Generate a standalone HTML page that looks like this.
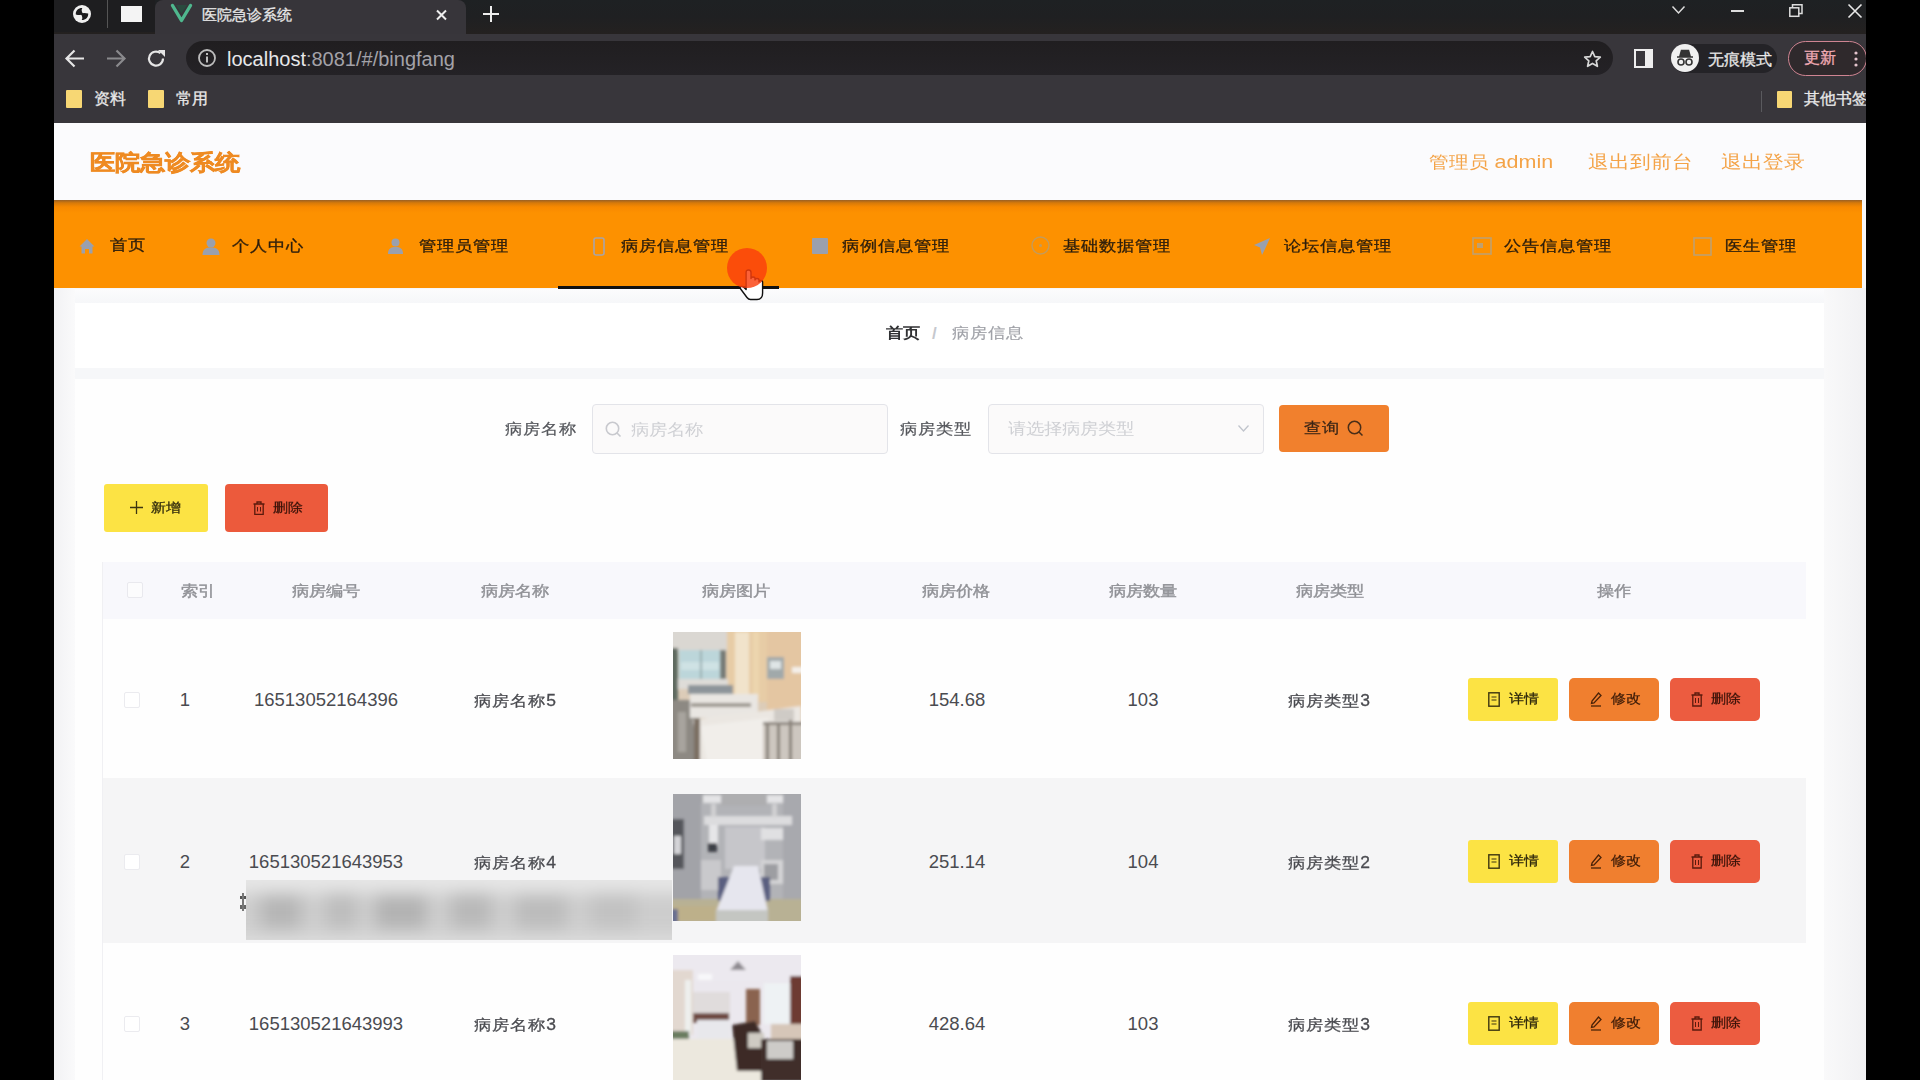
<!DOCTYPE html>
<html><head><meta charset="utf-8">
<style>
*{box-sizing:border-box;margin:0;padding:0}
html,body{width:1920px;height:1080px;overflow:hidden;background:#000;font-family:"Liberation Sans",sans-serif}
.a{position:absolute;white-space:nowrap;line-height:1}
#win{position:absolute;left:54px;top:0;width:1812px;height:1080px;overflow:hidden;background:#f7f7f9}
svg{position:absolute;overflow:visible}
</style></head><body>
<div id="win">
<!-- ===== CHROME ===== -->
<div class="a" style="left:0;top:0;width:1812px;height:34px;background:linear-gradient(#1e2123,#1f2022 50%,#242120)"></div>
<div class="a" style="left:0;top:0;width:101px;height:32px;background:#1e1e20"></div>
<div class="a" style="left:101px;top:0;width:311px;height:34px;background:#37353a;border-radius:8px 8px 0 0"></div>
<div class="a" style="left:0;top:34px;width:1812px;height:89px;background:#38363b"></div>
<!-- tab strip icons -->
<svg style="left:19px;top:5px" width="18" height="18" viewBox="0 0 18 18"><circle cx="9" cy="9" r="9" fill="#f0f0f0"/><path d="M2.8 9.4 C2.6 5.5 5.3 2.8 9.3 2.9 C8.1 4.8 8.6 7.2 10.6 9.3 C8 10.2 5.3 10.1 2.8 9.4 Z" fill="#1b1b1d"/><path d="M15.2 8.6 C15.4 12.5 12.7 15.2 8.7 15.1 C9.9 13.2 9.4 10.8 7.4 8.7 C10 7.8 12.7 7.9 15.2 8.6 Z" fill="#1b1b1d"/></svg>
<div class="a" style="left:53px;top:0;width:1px;height:28px;background:#555"></div>
<div class="a" style="left:67px;top:6px;width:21px;height:16px;background:#f4f4f4"></div>
<svg style="left:117px;top:4px" width="21" height="18" viewBox="0 0 21 18"><path d="M5 1 L10.5 9.5 L16 1 Z" fill="#2a4a3e"/><path d="M1.5 1.5 L10.5 16.5 L19.5 1.5" stroke="#4fb88e" stroke-width="3.4" fill="none" stroke-linejoin="round" stroke-linecap="round"/></svg>
<div class="a" style="left:148px;top:6.5px;font-size:15px;color:#e6e6e6;-webkit-text-stroke:0.3px #e6e6e6">医院急诊系统</div>
<svg style="left:382px;top:10px" width="11" height="10" viewBox="0 0 11 10"><path d="M1 0.5 L10 9.5 M10 0.5 L1 9.5" stroke="#eee" stroke-width="2"/></svg>
<svg style="left:429px;top:6px" width="16" height="16" viewBox="0 0 16 16"><path d="M8 0 V16 M0 8 H16" stroke="#eee" stroke-width="2"/></svg>
<!-- window controls -->
<svg style="left:1618px;top:6px" width="13" height="8" viewBox="0 0 13 8"><path d="M0.5 0.5 L6.5 7 L12.5 0.5" stroke="#ddd" stroke-width="1.5" fill="none"/></svg>
<div class="a" style="left:1677px;top:10px;width:13px;height:2px;background:#ddd"></div>
<svg style="left:1735px;top:4px" width="14" height="13" viewBox="0 0 14 13"><rect x="0.8" y="3.8" width="9" height="8.5" fill="none" stroke="#ddd" stroke-width="1.5"/><path d="M3.5 3.8 V0.8 H13 V9.5 H9.8" fill="none" stroke="#ddd" stroke-width="1.5"/></svg>
<svg style="left:1794px;top:4px" width="14" height="14" viewBox="0 0 14 14"><path d="M0.5 0.5 L13.5 13.5 M13.5 0.5 L0.5 13.5" stroke="#e8e8e8" stroke-width="1.6"/></svg>
<!-- toolbar -->
<svg style="left:11px;top:49px" width="20" height="19" viewBox="0 0 20 19"><path d="M19 9.5 H2 M9.5 1.5 L1.5 9.5 L9.5 17.5" stroke="#e6e6e6" stroke-width="2.2" fill="none"/></svg>
<svg style="left:52px;top:49px" width="20" height="19" viewBox="0 0 20 19"><path d="M1 9.5 H18 M10.5 1.5 L18.5 9.5 L10.5 17.5" stroke="#8a8a8d" stroke-width="2.2" fill="none"/></svg>
<svg style="left:93px;top:49px" width="19" height="19" viewBox="0 0 19 19"><path d="M16 9.5 A7 7 0 1 1 13.5 4.2" stroke="#e6e6e6" stroke-width="2.2" fill="none"/><path d="M11 1 L18 1 L18 8 Z" fill="#e6e6e6"/></svg>
<div class="a" style="left:132px;top:41px;width:1427px;height:34px;background:linear-gradient(#201e20,#242226);border-radius:17px"></div>
<svg style="left:144px;top:49px" width="18" height="18" viewBox="0 0 18 18"><circle cx="9" cy="9" r="8" stroke="#bdbdbd" stroke-width="1.8" fill="none"/><rect x="8" y="7.5" width="2" height="6" fill="#bdbdbd"/><rect x="8" y="4" width="2" height="2" fill="#bdbdbd"/></svg>
<div class="a" style="left:173px;top:49px;font-size:20px;color:#e8e8ea">localhost<span style="color:#a3a2a8">:8081/#/bingfang</span></div>
<svg style="left:1529px;top:50px" width="19" height="18" viewBox="0 0 19 18"><path d="M9.5 1.5 L11.8 6.6 L17.3 7.1 L13.2 10.8 L14.4 16.3 L9.5 13.4 L4.6 16.3 L5.8 10.8 L1.7 7.1 L7.2 6.6 Z" stroke="#d8d8d8" stroke-width="1.7" fill="none" stroke-linejoin="round"/></svg>
<svg style="left:1580px;top:49px" width="19" height="19" viewBox="0 0 19 19"><rect x="1" y="1" width="17" height="17" fill="none" stroke="#eee" stroke-width="2"/><rect x="11" y="1" width="7" height="17" fill="#eee"/></svg>
<div class="a" style="left:1617px;top:44px;width:106px;height:29px;background:#242327;border-radius:15px"></div>
<svg style="left:1617px;top:44px" width="28" height="28" viewBox="0 0 28 28"><circle cx="14" cy="14" r="14" fill="#f0f0f0"/><path d="M6 13 H22 M9 12 L10.5 6.5 H17.5 L19 12 Z" stroke="#333" stroke-width="1.6" fill="#333"/><circle cx="10" cy="18" r="3" stroke="#333" stroke-width="1.6" fill="none"/><circle cx="18" cy="18" r="3" stroke="#333" stroke-width="1.6" fill="none"/></svg>
<div class="a" style="left:1654px;top:52px;font-size:16px;color:#e8e8e8;-webkit-text-stroke:0.3px #e8e8e8">无痕模式</div>
<div class="a" style="left:1734px;top:41px;width:79px;height:35px;border:1.5px solid #cf8492;border-radius:18px;background:#2f292c"></div>
<div class="a" style="left:1750px;top:50px;font-size:16px;color:#f0aab4;-webkit-text-stroke:0.3px #f0aab4">更新</div>
<svg style="left:1800px;top:51px" width="4" height="16" viewBox="0 0 4 16"><circle cx="2" cy="2" r="1.6" fill="#e4c4cc"/><circle cx="2" cy="8" r="1.6" fill="#e4c4cc"/><circle cx="2" cy="14" r="1.6" fill="#e4c4cc"/></svg>
<!-- bookmarks bar -->
<div class="a" style="left:12px;top:90px;width:16px;height:18px;background:#f7d774;border-radius:1px"></div>
<div class="a" style="left:40px;top:91px;font-size:15.5px;color:#e8e8e8;-webkit-text-stroke:0.3px #e8e8e8">资料</div>
<div class="a" style="left:94px;top:90px;width:16px;height:18px;background:#f7d774;border-radius:1px"></div>
<div class="a" style="left:122px;top:91px;font-size:15.5px;color:#e8e8e8;-webkit-text-stroke:0.3px #e8e8e8">常用</div>
<div class="a" style="left:1707px;top:91px;width:1px;height:21px;background:#5a5a5e"></div>
<div class="a" style="left:1723px;top:91px;width:15px;height:17px;background:#f7d774;border-radius:1px"></div>
<div class="a" style="left:1750px;top:91px;font-size:15.5px;color:#e8e8e8;-webkit-text-stroke:0.3px #e8e8e8">其他书签</div>

<!-- ===== PAGE ===== -->
<div class="a" style="left:0;top:123px;width:1812px;height:77px;background:#fbfbfd"></div>
<div class="a" style="left:35.5px;top:150px;font-size:25px;font-weight:bold;color:#f29026;-webkit-text-stroke:0.6px #ee8a22;transform:scaleY(.87);transform-origin:50% 51%">医院急诊系统</div>
<div class="a" style="left:1375px;top:151.5px;font-size:20px;color:#f4a347;transform:scaleY(.87);transform-origin:50% 51%">管理员 <span style="font-size:21.5px">admin</span></div>
<div class="a" style="left:1533.5px;top:151.5px;font-size:20.5px;color:#f4a347;transform:scaleY(.87);transform-origin:50% 51%">退出到前台</div>
<div class="a" style="left:1666.5px;top:151.5px;font-size:20.5px;color:#f4a347;transform:scaleY(.87);transform-origin:50% 51%">退出登录</div>
<!-- nav -->
<div class="a" style="left:0;top:200px;width:1808px;height:88px;background:linear-gradient(rgba(120,80,50,.75) 0px,rgba(170,95,20,.45) 3px,rgba(230,110,0,.22) 7px,rgba(253,144,0,0) 13px),#fd9100"></div>
<div id="nav" style="position:absolute;left:0;top:0;color:#2b1d0c;font-size:17.6px;-webkit-text-stroke:0.35px #2b1d0c">
 <svg style="left:25px;top:238px" width="16" height="16" viewBox="0 0 16 16"><path d="M8 1 L15.5 8.5 L13.5 8.5 L13.5 15.5 L10 15.5 L10 11 L6 11 L6 15.5 L2.5 15.5 L2.5 8.5 L0.5 8.5 Z" fill="#9aa0ad"/></svg>
 <div class="a" style="left:55.5px;top:237px;transform:scaleY(.87);transform-origin:50% 51%">首页</div>
 <svg style="left:148px;top:238px" width="18" height="17" viewBox="0 0 18 17"><circle cx="9" cy="5" r="4.5" fill="#9aa0ad"/><path d="M0.5 17 C0.5 11 4 9.5 9 9.5 C14 9.5 17.5 11 17.5 17 Z" fill="#9aa0ad"/></svg>
 <div class="a" style="left:177.5px;top:238px;transform:scaleY(.87);transform-origin:50% 51%">个人中心</div>
 <svg style="left:334px;top:238px" width="15" height="16" viewBox="0 0 15 16"><circle cx="7.5" cy="4.5" r="4" fill="#9aa0ad"/><path d="M0 16 C0 10.5 3 9 7.5 9 C12 9 15 10.5 15 16 Z" fill="#9aa0ad"/></svg>
 <div class="a" style="left:364.5px;top:238px;transform:scaleY(.87);transform-origin:50% 51%">管理员管理</div>
 <svg style="left:539px;top:237px" width="12" height="19" viewBox="0 0 12 19"><rect x="1" y="1" width="10" height="17" rx="2" fill="none" stroke="#a8a4a8" stroke-width="1.6"/></svg>
 <div class="a" style="left:566.5px;top:238px;transform:scaleY(.87);transform-origin:50% 51%">病房信息管理</div>
 <svg style="left:758px;top:238px" width="16" height="16" viewBox="0 0 16 16"><rect x="0" y="0" width="16" height="16" rx="1" fill="#9aa0ad"/></svg>
 <div class="a" style="left:787.5px;top:238px;transform:scaleY(.87);transform-origin:50% 51%">病例信息管理</div>
 <svg style="left:977px;top:236px" width="19" height="19" viewBox="0 0 19 19"><circle cx="9.5" cy="9.5" r="8.5" fill="none" stroke="#c49b5a" stroke-width="1.4"/><circle cx="9.5" cy="9.5" r="1.5" fill="#c49b5a"/></svg>
 <div class="a" style="left:1008.5px;top:238px;transform:scaleY(.87);transform-origin:50% 51%">基础数据管理</div>
 <svg style="left:1200px;top:238px" width="16" height="17" viewBox="0 0 16 17"><path d="M16 0 L0 7 L6 9.5 L8 17 L11 11 Z" fill="#9aa0ad"/></svg>
 <div class="a" style="left:1229.5px;top:238px;transform:scaleY(.87);transform-origin:50% 51%">论坛信息管理</div>
 <svg style="left:1418px;top:237px" width="20" height="18" viewBox="0 0 20 18"><rect x="1" y="1" width="18" height="16" fill="none" stroke="#bfa070" stroke-width="1.6"/><rect x="5" y="6" width="6" height="5" fill="#bfa070"/></svg>
 <div class="a" style="left:1450px;top:238px;transform:scaleY(.87);transform-origin:50% 51%">公告信息管理</div>
 <svg style="left:1639px;top:237px" width="19" height="19" viewBox="0 0 19 19"><rect x="1" y="1" width="17" height="17" fill="none" stroke="#bfa070" stroke-width="1.6"/></svg>
 <div class="a" style="left:1670.5px;top:238px;transform:scaleY(.87);transform-origin:50% 51%">医生管理</div>
</div>
<div class="a" style="left:504px;top:286px;width:221px;height:3px;background:#111"></div>

<!-- page bg cards -->
<div class="a" style="left:0;top:288px;width:21px;height:792px;background:linear-gradient(90deg,#f2f2f4,#fafafb)"></div>
<div class="a" style="left:1770px;top:288px;width:42px;height:792px;background:linear-gradient(90deg,#f9f9fa,#f1f1f3)"></div>
<div class="a" style="left:21px;top:289px;width:1749px;height:14px;background:linear-gradient(#fcfcfd,#f6f7f9)"></div>
<div class="a" style="left:21px;top:303px;width:1749px;height:65px;background:#fff"></div>
<div class="a" style="left:21px;top:368px;width:1749px;height:11px;background:#f6f7f9"></div>
<div class="a" style="left:21px;top:379px;width:1749px;height:701px;background:#fefefe"></div>
<!-- breadcrumb -->
<div class="a" style="left:831.5px;top:325px;font-size:17px;font-weight:bold;color:#303133;transform:scaleY(.87);transform-origin:50% 51%">首页</div>
<div class="a" style="left:878px;top:325px;font-size:17px;font-weight:bold;color:#c6c8ce">/</div>
<div class="a" style="left:897.5px;top:325px;font-size:17.5px;color:#a0a2a8;-webkit-text-stroke:0.2px #a0a2a8;transform:scaleY(.87);transform-origin:50% 51%">病房信息</div>
<!-- search -->
<div class="a" style="left:451px;top:421px;font-size:17.6px;color:#55575c;-webkit-text-stroke:0.25px #55575c;transform:scaleY(.87);transform-origin:50% 51%">病房名称</div>
<div class="a" style="left:538px;top:404px;width:296px;height:50px;border:1px solid #e3e4e9;border-radius:4px;background:#fbfafa"></div>
<svg style="left:551px;top:421px" width="17" height="17" viewBox="0 0 17 17"><circle cx="7.5" cy="7.5" r="6.2" fill="none" stroke="#c8c9ce" stroke-width="1.6"/><path d="M12 12 L15.5 15.5" stroke="#c8c9ce" stroke-width="1.6"/></svg>
<div class="a" style="left:576.5px;top:421px;font-size:18px;color:#cfd0d4;transform:scaleY(.87);transform-origin:50% 51%">病房名称</div>
<div class="a" style="left:846px;top:421px;font-size:17.6px;color:#55575c;-webkit-text-stroke:0.25px #55575c;transform:scaleY(.87);transform-origin:50% 51%">病房类型</div>
<div class="a" style="left:934px;top:404px;width:276px;height:50px;border:1px solid #e3e4e9;border-radius:4px;background:#fbfafa"></div>
<div class="a" style="left:953.5px;top:421px;font-size:17.9px;color:#cfd0d4;transform:scaleY(.87);transform-origin:50% 51%">请选择病房类型</div>
<svg style="left:1184px;top:425px" width="11" height="7" viewBox="0 0 11 7"><path d="M0.5 0.5 L5.5 6 L10.5 0.5" stroke="#c0c4cc" stroke-width="1.3" fill="none"/></svg>
<div class="a" style="left:1225px;top:405px;width:110px;height:47px;background:#f1802d;border-radius:4px"></div>
<div class="a" style="left:1249.5px;top:420px;font-size:17.5px;color:#3b2516;-webkit-text-stroke:0.3px #3b2516;transform:scaleY(.87);transform-origin:50% 51%">查询</div>
<svg style="left:1293px;top:420px" width="17" height="17" viewBox="0 0 17 17"><circle cx="7.5" cy="7.5" r="6.2" fill="none" stroke="#4a2e18" stroke-width="1.5"/><path d="M12 12 L15.5 15.5" stroke="#4a2e18" stroke-width="1.5"/></svg>
<!-- add/delete -->
<div class="a" style="left:50px;top:484px;width:104px;height:48px;background:#fce344;border-radius:3px"></div>
<svg style="left:76px;top:501px" width="13" height="13" viewBox="0 0 13 13"><path d="M6.5 0 V13 M0 6.5 H13" stroke="#3d3510" stroke-width="1.3"/></svg>
<div class="a" style="left:96.5px;top:500px;font-size:15px;color:#2f290c;-webkit-text-stroke:0.3px #2f290c;transform:scaleY(.87);transform-origin:50% 51%">新增</div>
<div class="a" style="left:171px;top:484px;width:103px;height:48px;background:#ec5a3c;border-radius:4px"></div>
<svg style="left:199px;top:501px" width="12" height="14" viewBox="0 0 12 14"><path d="M0.5 3 H11.5 M4 3 V1 H8 V3 M1.8 3 V13.3 H10.2 V3" stroke="#5a1a0c" stroke-width="1.3" fill="none"/><path d="M4.5 6 V10.5 M7.5 6 V10.5" stroke="#5a1a0c" stroke-width="1"/></svg>
<div class="a" style="left:218.5px;top:500px;font-size:15px;color:#3d140a;-webkit-text-stroke:0.3px #3d140a;transform:scaleY(.87);transform-origin:50% 51%">删除</div>
<!-- table -->
<div class="a" style="left:48px;top:562px;width:1704px;height:57px;background:#f8f8fc"></div>
<div class="a" style="left:48px;top:562px;width:1px;height:518px;background:#f0f0f3"></div>
<div class="a" style="left:73px;top:582px;width:16px;height:16px;border:1px solid #e9e9ee;border-radius:2px;background:#fcfcfd"></div>
<div class="a" style="left:44px;width:200px;text-align:center;top:583px;font-size:17.2px;color:#909196;-webkit-text-stroke:0.45px #909196;transform:scaleY(.87);transform-origin:50% 51%">索引</div>
<div class="a" style="left:172px;width:200px;text-align:center;top:583px;font-size:17.2px;color:#909196;-webkit-text-stroke:0.45px #909196;transform:scaleY(.87);transform-origin:50% 51%">病房编号</div>
<div class="a" style="left:361px;width:200px;text-align:center;top:583px;font-size:17.2px;color:#909196;-webkit-text-stroke:0.45px #909196;transform:scaleY(.87);transform-origin:50% 51%">病房名称</div>
<div class="a" style="left:582px;width:200px;text-align:center;top:583px;font-size:17.2px;color:#909196;-webkit-text-stroke:0.45px #909196;transform:scaleY(.87);transform-origin:50% 51%">病房图片</div>
<div class="a" style="left:802px;width:200px;text-align:center;top:583px;font-size:17.2px;color:#909196;-webkit-text-stroke:0.45px #909196;transform:scaleY(.87);transform-origin:50% 51%">病房价格</div>
<div class="a" style="left:989px;width:200px;text-align:center;top:583px;font-size:17.2px;color:#909196;-webkit-text-stroke:0.45px #909196;transform:scaleY(.87);transform-origin:50% 51%">病房数量</div>
<div class="a" style="left:1176px;width:200px;text-align:center;top:583px;font-size:17.2px;color:#909196;-webkit-text-stroke:0.45px #909196;transform:scaleY(.87);transform-origin:50% 51%">病房类型</div>
<div class="a" style="left:1460px;width:200px;text-align:center;top:583px;font-size:17.2px;color:#909196;-webkit-text-stroke:0.45px #909196;transform:scaleY(.87);transform-origin:50% 51%">操作</div>
<div class="a" style="left:49px;top:619px;width:1703px;height:159px;background:#fefefe"></div>
<div class="a" style="left:49px;top:778px;width:1703px;height:165px;background:#f5f5f6"></div>
<div class="a" style="left:49px;top:943px;width:1703px;height:137px;background:#fefefe"></div>
<div class="a" style="left:70px;top:692px;width:16px;height:16px;border:1px solid #ebebef;border-radius:2px;background:#fff"></div>
<div class="a" style="left:81px;width:100px;text-align:center;top:690.5px;font-size:18.5px;color:#4a4b50">1</div>
<div class="a" style="left:172px;width:200px;text-align:center;top:690.5px;font-size:18.5px;color:#4a4b50">16513052164396</div>
<div class="a" style="left:361px;width:200px;text-align:center;top:692.5px;font-size:17.5px;color:#4a4b50;-webkit-text-stroke:0.3px #4a4b50;transform:scaleY(.87);transform-origin:50% 51%">病房名称<span style="display:inline-block;transform:scaleY(1.1);transform-origin:50% 85%">5</span></div>
<div class="a" style="left:803px;width:200px;text-align:center;top:690.5px;font-size:18.5px;color:#4a4b50">154.68</div>
<div class="a" style="left:989px;width:200px;text-align:center;top:690.5px;font-size:18.5px;color:#4a4b50">103</div>
<div class="a" style="left:1175px;width:200px;text-align:center;top:692.5px;font-size:17.5px;color:#4a4b50;-webkit-text-stroke:0.3px #4a4b50;transform:scaleY(.87);transform-origin:50% 51%">病房类型<span style="display:inline-block;transform:scaleY(1.1);transform-origin:50% 85%">3</span></div>
<div class="a" style="left:1414px;top:678px;width:90px;height:43px;background:#fce344;border-radius:3px"></div>
<svg style="left:1434px;top:692px" width="12" height="15" viewBox="0 0 12 15"><rect x="0.8" y="0.8" width="10.4" height="13.4" fill="none" stroke="#3d3510" stroke-width="1.4"/><path d="M3.5 5 H8.5 M3.5 8 H8.5" stroke="#3d3510" stroke-width="1.2"/></svg>
<div class="a" style="left:1454.5px;top:691px;font-size:15px;color:#2f290c;-webkit-text-stroke:0.3px #2f290c;transform:scaleY(.87);transform-origin:50% 51%">详情</div>
<div class="a" style="left:1515px;top:678px;width:90px;height:43px;background:#f07f2f;border-radius:5px"></div>
<svg style="left:1536px;top:692px" width="12" height="15" viewBox="0 0 12 15"><path d="M8.5 1 L11 3.5 L4 11 L1.5 11.5 L2 9 Z" fill="none" stroke="#4a2208" stroke-width="1.3"/><path d="M1 14 H11" stroke="#4a2208" stroke-width="1.3"/></svg>
<div class="a" style="left:1556.5px;top:691px;font-size:15px;color:#3d1c08;-webkit-text-stroke:0.3px #3d1c08;transform:scaleY(.87);transform-origin:50% 51%">修改</div>
<div class="a" style="left:1616px;top:678px;width:90px;height:43px;background:#ec5c40;border-radius:5px"></div>
<svg style="left:1637px;top:692px" width="12" height="15" viewBox="0 0 12 15"><path d="M0.5 3 H11.5 M4 3 V1 H8 V3 M1.8 3 V14 H10.2 V3" stroke="#5a1a0c" stroke-width="1.3" fill="none"/><path d="M4.5 6 V11 M7.5 6 V11" stroke="#5a1a0c" stroke-width="1"/></svg>
<div class="a" style="left:1656.5px;top:691px;font-size:15px;color:#3d140a;-webkit-text-stroke:0.3px #3d140a;transform:scaleY(.87);transform-origin:50% 51%">删除</div>
<div class="a" style="left:70px;top:854px;width:16px;height:16px;border:1px solid #ebebef;border-radius:2px;background:#fff"></div>
<div class="a" style="left:81px;width:100px;text-align:center;top:852.5px;font-size:18.5px;color:#4a4b50">2</div>
<div class="a" style="left:172px;width:200px;text-align:center;top:852.5px;font-size:18.5px;color:#4a4b50">165130521643953</div>
<div class="a" style="left:361px;width:200px;text-align:center;top:854.5px;font-size:17.5px;color:#4a4b50;-webkit-text-stroke:0.3px #4a4b50;transform:scaleY(.87);transform-origin:50% 51%">病房名称<span style="display:inline-block;transform:scaleY(1.1);transform-origin:50% 85%">4</span></div>
<div class="a" style="left:803px;width:200px;text-align:center;top:852.5px;font-size:18.5px;color:#4a4b50">251.14</div>
<div class="a" style="left:989px;width:200px;text-align:center;top:852.5px;font-size:18.5px;color:#4a4b50">104</div>
<div class="a" style="left:1175px;width:200px;text-align:center;top:854.5px;font-size:17.5px;color:#4a4b50;-webkit-text-stroke:0.3px #4a4b50;transform:scaleY(.87);transform-origin:50% 51%">病房类型<span style="display:inline-block;transform:scaleY(1.1);transform-origin:50% 85%">2</span></div>
<div class="a" style="left:1414px;top:840px;width:90px;height:43px;background:#fce344;border-radius:3px"></div>
<svg style="left:1434px;top:854px" width="12" height="15" viewBox="0 0 12 15"><rect x="0.8" y="0.8" width="10.4" height="13.4" fill="none" stroke="#3d3510" stroke-width="1.4"/><path d="M3.5 5 H8.5 M3.5 8 H8.5" stroke="#3d3510" stroke-width="1.2"/></svg>
<div class="a" style="left:1454.5px;top:853px;font-size:15px;color:#2f290c;-webkit-text-stroke:0.3px #2f290c;transform:scaleY(.87);transform-origin:50% 51%">详情</div>
<div class="a" style="left:1515px;top:840px;width:90px;height:43px;background:#f07f2f;border-radius:5px"></div>
<svg style="left:1536px;top:854px" width="12" height="15" viewBox="0 0 12 15"><path d="M8.5 1 L11 3.5 L4 11 L1.5 11.5 L2 9 Z" fill="none" stroke="#4a2208" stroke-width="1.3"/><path d="M1 14 H11" stroke="#4a2208" stroke-width="1.3"/></svg>
<div class="a" style="left:1556.5px;top:853px;font-size:15px;color:#3d1c08;-webkit-text-stroke:0.3px #3d1c08;transform:scaleY(.87);transform-origin:50% 51%">修改</div>
<div class="a" style="left:1616px;top:840px;width:90px;height:43px;background:#ec5c40;border-radius:5px"></div>
<svg style="left:1637px;top:854px" width="12" height="15" viewBox="0 0 12 15"><path d="M0.5 3 H11.5 M4 3 V1 H8 V3 M1.8 3 V14 H10.2 V3" stroke="#5a1a0c" stroke-width="1.3" fill="none"/><path d="M4.5 6 V11 M7.5 6 V11" stroke="#5a1a0c" stroke-width="1"/></svg>
<div class="a" style="left:1656.5px;top:853px;font-size:15px;color:#3d140a;-webkit-text-stroke:0.3px #3d140a;transform:scaleY(.87);transform-origin:50% 51%">删除</div>
<div class="a" style="left:70px;top:1016px;width:16px;height:16px;border:1px solid #ebebef;border-radius:2px;background:#fff"></div>
<div class="a" style="left:81px;width:100px;text-align:center;top:1014.5px;font-size:18.5px;color:#4a4b50">3</div>
<div class="a" style="left:172px;width:200px;text-align:center;top:1014.5px;font-size:18.5px;color:#4a4b50">165130521643993</div>
<div class="a" style="left:361px;width:200px;text-align:center;top:1016.5px;font-size:17.5px;color:#4a4b50;-webkit-text-stroke:0.3px #4a4b50;transform:scaleY(.87);transform-origin:50% 51%">病房名称<span style="display:inline-block;transform:scaleY(1.1);transform-origin:50% 85%">3</span></div>
<div class="a" style="left:803px;width:200px;text-align:center;top:1014.5px;font-size:18.5px;color:#4a4b50">428.64</div>
<div class="a" style="left:989px;width:200px;text-align:center;top:1014.5px;font-size:18.5px;color:#4a4b50">103</div>
<div class="a" style="left:1175px;width:200px;text-align:center;top:1016.5px;font-size:17.5px;color:#4a4b50;-webkit-text-stroke:0.3px #4a4b50;transform:scaleY(.87);transform-origin:50% 51%">病房类型<span style="display:inline-block;transform:scaleY(1.1);transform-origin:50% 85%">3</span></div>
<div class="a" style="left:1414px;top:1002px;width:90px;height:43px;background:#fce344;border-radius:3px"></div>
<svg style="left:1434px;top:1016px" width="12" height="15" viewBox="0 0 12 15"><rect x="0.8" y="0.8" width="10.4" height="13.4" fill="none" stroke="#3d3510" stroke-width="1.4"/><path d="M3.5 5 H8.5 M3.5 8 H8.5" stroke="#3d3510" stroke-width="1.2"/></svg>
<div class="a" style="left:1454.5px;top:1015px;font-size:15px;color:#2f290c;-webkit-text-stroke:0.3px #2f290c;transform:scaleY(.87);transform-origin:50% 51%">详情</div>
<div class="a" style="left:1515px;top:1002px;width:90px;height:43px;background:#f07f2f;border-radius:5px"></div>
<svg style="left:1536px;top:1016px" width="12" height="15" viewBox="0 0 12 15"><path d="M8.5 1 L11 3.5 L4 11 L1.5 11.5 L2 9 Z" fill="none" stroke="#4a2208" stroke-width="1.3"/><path d="M1 14 H11" stroke="#4a2208" stroke-width="1.3"/></svg>
<div class="a" style="left:1556.5px;top:1015px;font-size:15px;color:#3d1c08;-webkit-text-stroke:0.3px #3d1c08;transform:scaleY(.87);transform-origin:50% 51%">修改</div>
<div class="a" style="left:1616px;top:1002px;width:90px;height:43px;background:#ec5c40;border-radius:5px"></div>
<svg style="left:1637px;top:1016px" width="12" height="15" viewBox="0 0 12 15"><path d="M0.5 3 H11.5 M4 3 V1 H8 V3 M1.8 3 V14 H10.2 V3" stroke="#5a1a0c" stroke-width="1.3" fill="none"/><path d="M4.5 6 V11 M7.5 6 V11" stroke="#5a1a0c" stroke-width="1"/></svg>
<div class="a" style="left:1656.5px;top:1015px;font-size:15px;color:#3d140a;-webkit-text-stroke:0.3px #3d140a;transform:scaleY(.87);transform-origin:50% 51%">删除</div>
<svg style="left:619px;top:632px;overflow:hidden" width="128" height="127" viewBox="0 0 128 127">
<defs><filter id="bl1" x="-20%" y="-20%" width="140%" height="140%"><feGaussianBlur stdDeviation="1.8"/></filter></defs>
<rect width="128" height="127" fill="#dcccb8"/>
<g filter="url(#bl1)">
<rect x="-5" y="-5" width="62" height="25" fill="#dad7d2"/>
<rect x="54" y="-5" width="80" height="75" fill="#e7cca6"/>
<rect x="94" y="-5" width="40" height="85" fill="#e4c6a2"/>
<rect x="62" y="0" width="14" height="65" fill="#f1e3cb"/>
<rect x="80" y="0" width="6" height="65" fill="#ecd5ae"/>
<rect x="-5" y="16" width="10" height="56" fill="#5e6a60"/>
<rect x="6" y="18" width="42" height="30" fill="#bcd6da"/>
<rect x="8" y="30" width="38" height="8" fill="#cfe2e4"/>
<rect x="27" y="18" width="2" height="30" fill="#98aeb0"/>
<rect x="47" y="18" width="6" height="44" fill="#767a76"/>
<rect x="5" y="47" width="50" height="10" fill="#dedcd8"/>
<rect x="15" y="53" width="45" height="9" fill="#8d949a"/>
<rect x="94" y="25" width="17" height="22" fill="#a1a9aa"/>
<rect x="97" y="29" width="11" height="8" fill="#dfe5e6"/>
<rect x="119" y="35" width="12" height="6" fill="#f4f0ea"/>
<rect x="-5" y="68" width="30" height="64" fill="#8d8983"/>
<rect x="5" y="80" width="8" height="40" fill="#a8a49e"/>
<rect x="17" y="62" width="68" height="24" fill="#e9e6e2"/>
<rect x="18" y="71" width="60" height="4" fill="#9c978f"/>
<polygon points="20,88 128,74 128,132 26,132" fill="#ebe7e2"/>
<polygon points="28,94 95,86 96,132 34,132" fill="#f1eeea"/>
<rect x="101" y="77" width="20" height="12" fill="#cfcbc6"/>
<rect x="90" y="90" width="40" height="42" fill="#cdc7c0"/>
<rect x="93" y="92" width="3" height="40" fill="#857e76"/>
<rect x="104" y="90" width="3" height="42" fill="#857e76"/>
<rect x="116" y="88" width="3" height="44" fill="#857e76"/>
<rect x="90" y="90" width="40" height="3" fill="#8a837b"/>
<rect x="21" y="86" width="6" height="46" fill="#7a6e62"/>
</g></svg>
<svg style="left:619px;top:794px;overflow:hidden" width="128" height="127" viewBox="0 0 128 127">
<defs><filter id="bl2" x="-20%" y="-20%" width="140%" height="140%"><feGaussianBlur stdDeviation="1.7"/></filter></defs>
<rect width="128" height="127" fill="#b2b3b7"/>
<g filter="url(#bl2)">
<rect x="-5" y="-5" width="140" height="14" fill="#a6a7aa"/>
<rect x="30" y="1" width="84" height="8" fill="#e4e4e6"/>
<rect x="48" y="-5" width="46" height="17" fill="#aeaeb0"/>
<rect x="-5" y="0" width="33" height="132" fill="#a2a3a8"/>
<rect x="-5" y="25" width="16" height="50" fill="#54565c"/>
<rect x="1" y="42" width="7" height="18" fill="#d4d4d8"/>
<rect x="110" y="0" width="25" height="132" fill="#a8a9ae"/>
<rect x="52" y="33" width="40" height="42" fill="#c6c6ca"/>
<rect x="31" y="22" width="88" height="9" fill="#dcdcde"/>
<rect x="38" y="10" width="5" height="13" fill="#d0d0d2"/>
<rect x="99" y="10" width="5" height="13" fill="#d0d0d2"/>
<rect x="88" y="34" width="22" height="12" fill="#e0e0e2"/>
<rect x="36" y="31" width="9" height="20" fill="#e6e6e8"/>
<rect x="35" y="49" width="9" height="9" fill="#3e4046"/>
<rect x="88" y="66" width="22" height="24" fill="#d4d4d6"/>
<rect x="91" y="70" width="14" height="16" fill="#9d9ea2"/>
<rect x="28" y="66" width="20" height="30" fill="#c9c9cc"/>
<rect x="-5" y="105" width="140" height="27" fill="#b8b194"/>
<rect x="0" y="112" width="50" height="15" fill="#bdb08a"/>
<polygon points="45,83 57,83 57,107 45,107" fill="#5a5e80"/>
<polygon points="85,83 97,83 97,107 86,107" fill="#5a5e80"/>
<polygon points="61,72 85,72 95,118 43,118" fill="#e6e6ee"/>
<rect x="43" y="116" width="52" height="15" fill="#c4c6c2"/>
<rect x="-5" y="115" width="10" height="15" fill="#6a6f90"/>
</g></svg>
<svg style="left:619px;top:955px;overflow:hidden" width="128" height="127" viewBox="0 0 128 127">
<defs><filter id="bl3" x="-20%" y="-20%" width="140%" height="140%"><feGaussianBlur stdDeviation="1.7"/></filter></defs>
<rect width="128" height="127" fill="#ebe8ee"/>
<g filter="url(#bl3)">
<rect x="-5" y="-5" width="140" height="30" fill="#ece9ef"/>
<polygon points="57,15 65,6 73,15" fill="#8e8a90"/>
<rect x="25" y="19" width="14" height="6" fill="#f8f8fa"/>
<rect x="-5" y="15" width="25" height="65" fill="#e2d8d0"/>
<rect x="12" y="25" width="6" height="55" fill="#eef0ee"/>
<rect x="20" y="37" width="37" height="25" fill="#e0dcdc"/>
<rect x="20" y="58" width="36" height="10" fill="#6e4a42"/>
<rect x="24" y="65" width="33" height="19" fill="#e8e8ec"/>
<rect x="73" y="34" width="14" height="36" fill="#8a6450"/>
<rect x="91" y="28" width="26" height="41" fill="#eef2f4"/>
<rect x="117" y="21" width="15" height="48" fill="#6d3a30"/>
<rect x="98" y="69" width="34" height="16" fill="#d6c6b8"/>
<rect x="-5" y="76" width="21" height="26" fill="#6b7d60"/>
<rect x="-5" y="84" width="140" height="48" fill="#ece8de"/>
<polygon points="59,70 82,66 96,92 90,116 64,116" fill="#3c2a27"/>
<rect x="75" y="78" width="16" height="15" fill="#cfcbc3"/>
<rect x="88" y="84" width="44" height="43" fill="#3f2d2b"/>
<rect x="94" y="86" width="26" height="18" fill="#cdcbc8"/>
</g></svg>
<div class="a" style="left:192px;top:880px;width:426px;height:60px;overflow:hidden;background:#d2d2d2">
<div style="position:absolute;left:-30px;top:-25px;width:490px;height:110px;filter:blur(8px)">
<div style="position:absolute;left:0;top:0;width:490px;height:38px;background:#e6e6e6"></div>
<div style="position:absolute;left:0;top:38px;width:490px;height:40px;background:#cdcdcd"></div>
<div style="position:absolute;left:45px;top:40px;width:40px;height:34px;background:#b6b6b6"></div>
<div style="position:absolute;left:110px;top:38px;width:30px;height:36px;background:#bdbdbd"></div>
<div style="position:absolute;left:160px;top:40px;width:50px;height:34px;background:#b3b3b3"></div>
<div style="position:absolute;left:235px;top:38px;width:40px;height:36px;background:#b9b9b9"></div>
<div style="position:absolute;left:300px;top:40px;width:50px;height:34px;background:#bcbcbc"></div>
<div style="position:absolute;left:375px;top:38px;width:45px;height:36px;background:#c2c2c2"></div>
<div style="position:absolute;left:0;top:80px;width:490px;height:30px;background:#dcdcdc"></div>
</div></div>
<div class="a" style="left:186px;top:896px;width:6px;height:3px;background:#555"></div>
<div class="a" style="left:186px;top:905px;width:6px;height:4px;background:#666"></div>
<div class="a" style="left:188px;top:893px;width:2px;height:18px;background:#777"></div>
<svg style="left:684px;top:268px" width="26" height="34" viewBox="0 0 26 34"><path d="M8.1 4.5 Q8.1 2 10.55 2 Q13 2 13 4.5 L13 10.5 Q13 9 15 9 Q17 9 17 10.5 L17 12 Q17 10.5 19 10.5 Q21 10.5 21 12 L21 14 Q21 12.5 22.8 12.5 Q24.6 12.5 24.6 14 L24.6 25 Q24.6 31.5 19 31.5 L12.5 31.5 Q10.5 31.5 9 29.5 L2.3 20.5 Q1.5 19 3 18.5 Q4.5 18 6 19.5 L8.1 21.5 Z" fill="#fff" stroke="#111" stroke-width="1.4" stroke-linejoin="round"/></svg>
<div class="a" style="left:673px;top:248px;width:40px;height:40px;border-radius:50%;background:rgba(250,62,12,.82);filter:blur(.6px)"></div>
</div>
</body></html>
